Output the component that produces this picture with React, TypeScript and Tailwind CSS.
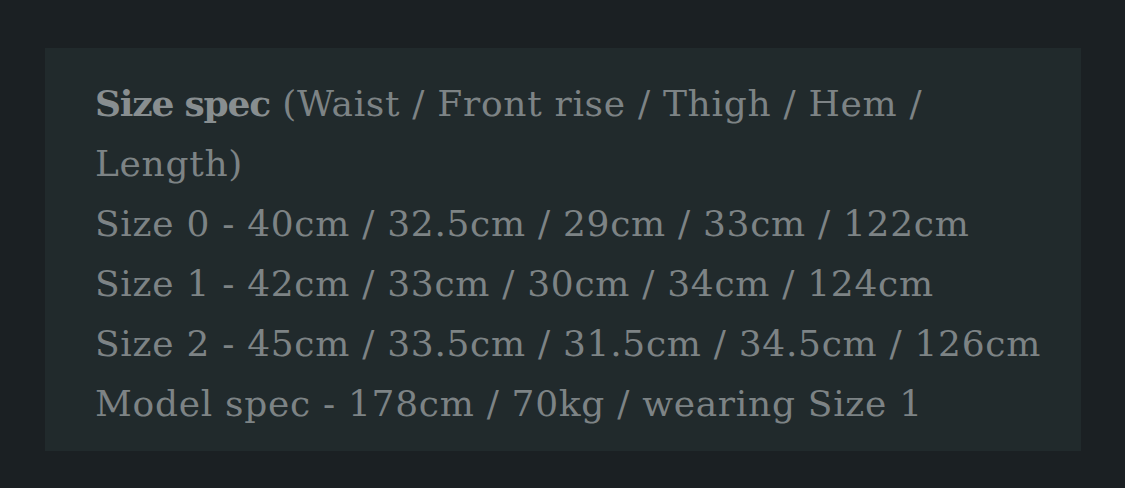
export default function App() {
  const lines = [
    "Size 0 - 40cm / 32.5cm / 29cm / 33cm / 122cm",
    "Size 1 - 42cm / 33cm / 30cm / 34cm / 124cm",
    "Size 2 - 45cm / 33.5cm / 31.5cm / 34.5cm / 126cm",
    "Model spec - 178cm / 70kg / wearing Size 1",
  ];
  return (
    <div className="w-[1125px] h-[488px] bg-[#1b2023] pt-[48px] pl-[45px]">
      <div
        className="w-[1036px] h-[403px] bg-[#212a2c] pl-[50px] pr-0 pt-[25px] text-[36px] leading-[60px] tracking-[0.7px] text-[#7d8385]"
        style={{ fontFamily: '"DejaVu Serif", serif' }}
      >
        <p>
          <span className="font-bold tracking-[-1.2px] text-[#888e90]">Size spec</span> (Waist / Front rise / Thigh / Hem / Length)
        </p>
        {lines.map((l) => (
          <p key={l} className="whitespace-nowrap">{l}</p>
        ))}
      </div>
    </div>
  );
}
